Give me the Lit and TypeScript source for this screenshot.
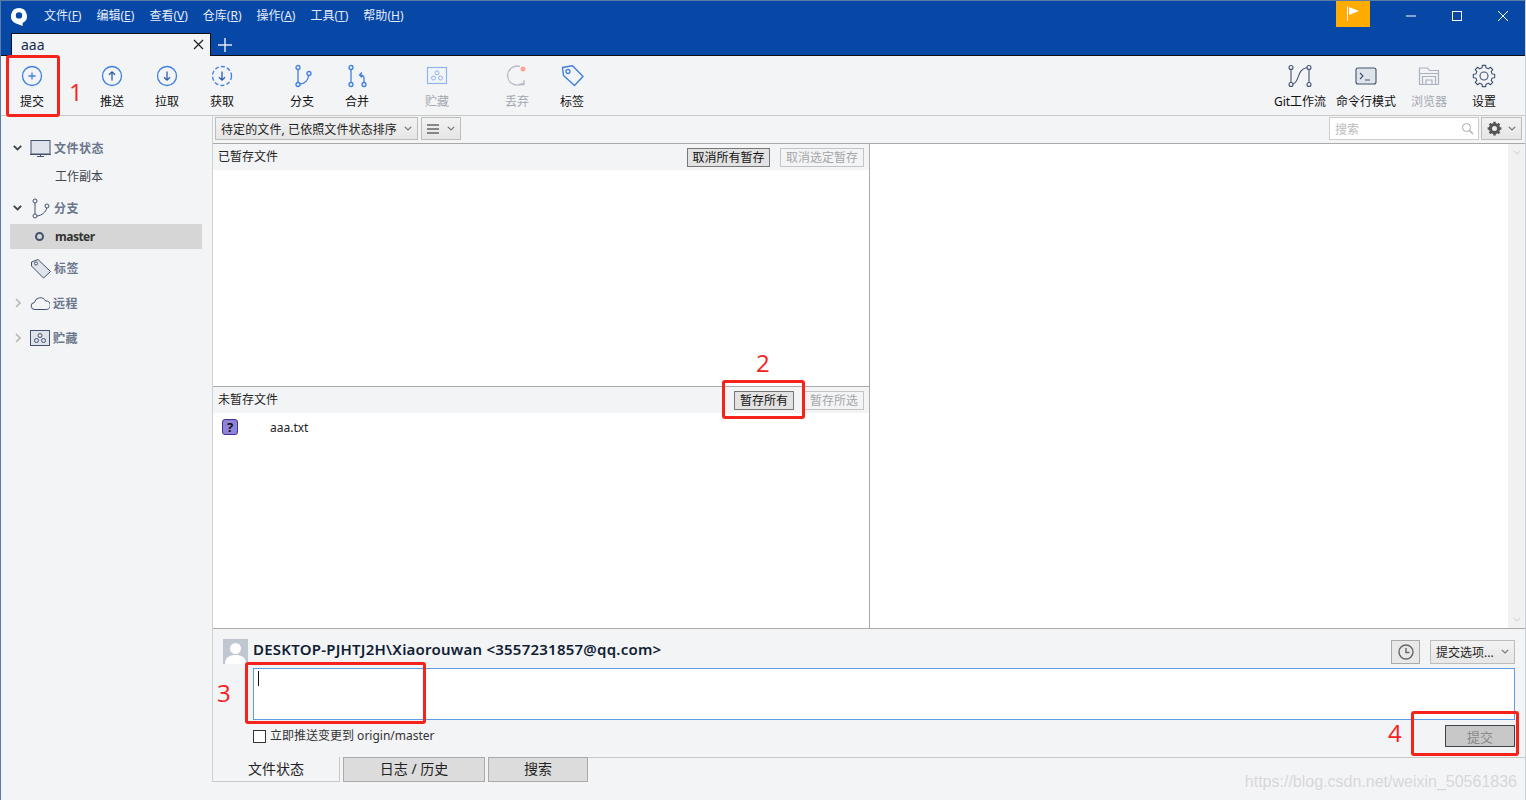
import { LitElement, html, css, svg } from "lit";
import { customElement } from "lit/decorators.js";

const B = "#3f7fe0";
const D = "#42526e";
const ic = (c: unknown, s = 24) => html`<svg width=${s} height=${s} viewBox="0 0 24 24" fill="none">${c}</svg>`;

function gearPath(cx: number, cy: number, ro: number, ri: number, n: number) {
  const pts: string[] = [];
  const step = (Math.PI * 2) / n;
  for (let k = 0; k < n; k++) {
    const a = k * step - Math.PI / 2;
    const w = step * 0.2;
    const w2 = step * 0.3;
    const p = (r: number, t: number) => `${(cx + r * Math.cos(t)).toFixed(2)} ${(cy + r * Math.sin(t)).toFixed(2)}`;
    pts.push(p(ri, a - w2), p(ro, a - w), p(ro, a + w), p(ri, a + w2));
  }
  return `M${pts.join("L")}Z`;
}

const icons: Record<string, unknown> = {
  commit: svg`<circle cx="12" cy="12" r="9.5" stroke=${B} stroke-width="1.3"/><path d="M12 8.5v7M8.5 12h7" stroke=${B} stroke-width="1.3"/>`,
  push: svg`<circle cx="12" cy="12" r="9.5" stroke=${B} stroke-width="1.3"/><path d="M12 16.5V8M9 10.8 12 7.8l3 3" stroke="#2a5cb0" stroke-width="1.3"/>`,
  pull: svg`<circle cx="12" cy="12" r="9.5" stroke=${B} stroke-width="1.3"/><path d="M12 7.5V16M9 13.2l3 3 3-3" stroke="#2a5cb0" stroke-width="1.3"/>`,
  fetch: svg`<circle cx="12" cy="12" r="9.5" stroke=${B} stroke-width="1.3" stroke-dasharray="4 2.2"/><path d="M12 7.5V16M9 13.2l3 3 3-3" stroke="#2a5cb0" stroke-width="1.3"/>`,
  branch: svg`<circle cx="8" cy="3.5" r="2" stroke=${B} stroke-width="1.3"/><circle cx="8" cy="20.5" r="2" stroke=${B} stroke-width="1.3"/><circle cx="19" cy="9.5" r="2" stroke=${B} stroke-width="1.3"/><path d="M8 5.5v13M10 20c5-.5 8-4 8.6-8.5" stroke=${B} stroke-width="1.3"/>`,
  merge: svg`<circle cx="6" cy="3.5" r="2" stroke=${B} stroke-width="1.3"/><circle cx="6" cy="20.5" r="2" stroke=${B} stroke-width="1.3"/><circle cx="19" cy="20.5" r="2" stroke=${B} stroke-width="1.3"/><path d="M6 5.5v13M19 18.5v-4c0-2-1.500-3.500-4-3.500M17 8.500 14.500 11l2.500 2.500" stroke=${B} stroke-width="1.3"/>`,
  stash: svg`<rect x="2.500" y="3.500" width="19" height="16" fill="#f3f4f6" stroke="#8fb4ee" stroke-width="1.2"/><circle cx="12" cy="8.800" r="2" stroke="#8fb4ee"/><circle cx="8.500" cy="14" r="2" stroke="#8fb4ee"/><circle cx="15.500" cy="14" r="2" stroke="#8fb4ee"/>`,
  discard: svg`<path d="M18 19a9.500 9.500 0 1 1-3-16.500" stroke="#b4bac4" stroke-width="1.300"/><path d="M14 20.500h5v-4.500" stroke="#b4bac4" stroke-width="1.300"/><circle cx="18" cy="5" r="2.500" fill="#ffa39a"/>`,
  tag: svg`<path d="M2.500 3.500 12.500 1.800 23 12.500 14.500 21.500 3.500 11.500Z" stroke=${B} stroke-width="1.400" stroke-linejoin="round"/><circle cx="8" cy="7.500" r="2" stroke=${B} stroke-width="1.300"/>`,
  flow: svg`<circle cx="3" cy="3.500" r="2" stroke=${D} stroke-width="1.100"/><circle cx="3" cy="20.500" r="2" stroke=${D} stroke-width="1.100"/><circle cx="21" cy="3.500" r="2" stroke=${D} stroke-width="1.100"/><circle cx="21" cy="20.500" r="2" stroke=${D} stroke-width="1.100"/><path d="M3 5.500v13M21 5.500v13M5 20c7-2 3-14 14-16.500" stroke=${D} stroke-width="1.100"/>`,
  term: svg`<rect x="2" y="4" width="20" height="16" rx="2" fill="#dfe3ea" stroke=${D} stroke-width="1.100"/><path d="M6 9l3 3-3 3M11 16h5" stroke=${D} stroke-width="1.100"/>`,
  browse: svg`<path d="M2.500 20.500V4h8l2 2.500h9v14Z" stroke="#a9b1bf" stroke-width="1.200"/><path d="M2.500 9.500h19M5.500 20.500v-8h13v8M9 20.500v-4.500h6v4.500" stroke="#a9b1bf" stroke-width="1.200"/>`,
  gear: svg`<path d=${gearPath(12, 12, 10.8, 8.4, 8)} stroke=${D} stroke-width="1.100" stroke-linejoin="round"/><circle cx="12" cy="12" r="4" stroke=${D} stroke-width="1.100"/>`,
};

const monitor = svg`<rect x="1" y="1.500" width="19" height="13.500" fill="#dfe3ea" stroke=${D}/><path d="M0 15.500h21M7 17.500h7M10.500 15.500v2" stroke=${D}/>`;
const sbBranch = svg`<circle cx="5" cy="3" r="2" stroke=${D}/><circle cx="5" cy="18" r="2" stroke=${D}/><circle cx="17" cy="8" r="2" stroke=${D}/><path d="M5 5v11M7 18c5-.5 9-4 9.700-8" stroke=${D}/>`;
const sbTag = svg`<path d="M1.500 4 8 1.500 20.500 13.500 13.500 20 1.500 8Z" fill="#dfe3ea" stroke=${D} stroke-linejoin="round"/><circle cx="6" cy="5.500" r="1.500" fill="#f3f4f6" stroke=${D}/>`;
const sbCloud = svg`<path d="M5 15.500a3.500 3.500 0 0 1-.6-7 6 6 0 0 1 11.200-1.500 4.300 4.300 0 0 1 1.200 8.500Z" stroke=${D}/>`;
const sbStash = svg`<rect x=".5" y="2.500" width="19" height="15" fill="#dfe3ea" stroke=${D}/><circle cx="10" cy="7.500" r="2" stroke=${D}/><circle cx="6.500" cy="12.500" r="2" stroke=${D}/><circle cx="13.500" cy="12.500" r="2" stroke=${D}/>`;
const chev = (cls: string) => html`<svg class=${cls} width="8" height="5" viewBox="0 0 8 5" fill="none"><path d="M.8.8 4 4 7.200.8" stroke="currentColor" stroke-width="1.200"/></svg>`;
const chevBold = html`<svg class="arrow" width="9" height="6" viewBox="0 0 9 6" fill="none"><path d="M.8.8l3.700 3.700L8.200.8" stroke="currentColor" stroke-width="1.900"/></svg>`;
const chevR = html`<svg class="arrow closed" width="6" height="10" viewBox="0 0 6 10" fill="none"><path d="M1 1l4 4-4 4" stroke="currentColor" stroke-width="1.600"/></svg>`;

type Tool = { k: string; t: string; off?: boolean; gap?: boolean; w?: number };
const left: Tool[] = [
  { k: "commit", t: "提交" },
  { k: "push", t: "推送", gap: true },
  { k: "pull", t: "拉取" },
  { k: "fetch", t: "获取" },
  { k: "branch", t: "分支", gap: true },
  { k: "merge", t: "合并" },
  { k: "stash", t: "贮藏", off: true, gap: true },
  { k: "discard", t: "丢弃", off: true, gap: true },
  { k: "tag", t: "标签" },
];
const right: Tool[] = [
  { k: "flow", t: "Git工作流", w: 61 },
  { k: "term", t: "命令行模式", w: 71 },
  { k: "browse", t: "浏览器", off: true },
  { k: "gear", t: "设置" },
];
const menus: [string, string][] = [["文件", "F"], ["编辑", "E"], ["查看", "V"], ["仓库", "R"], ["操作", "A"], ["工具", "T"], ["帮助", "H"]];

@customElement("app-root")
export class AppRoot extends LitElement {
  static styles = css`
    :host { display: block; height: 800px; overflow: hidden; font: 12px "Noto Sans", "Noto Sans CJK SC", sans-serif; color: #172b4d; }
    * { box-sizing: border-box; }
    .win { position: relative; height: 800px; display: flex; flex-direction: column; background: #f3f4f6; border-left: 1px solid #5b7da5; border-top: 1px solid #5b7da5; border-right: 1px solid #c9d3e0; overflow: hidden; }
    .top { height: 55px; background: #0747a6; border-bottom: 1px solid #111; flex: none; display: flex; flex-direction: column; }
    .menubar { height: 31px; display: flex; align-items: center; color: #fff; flex: none; margin-right: -1px; }
    .logo { width: 16px; height: 18px; margin: 0 17px 0 10px; }
    .menu { display: flex; gap: 15px; color: #e6ecf6; margin-top: -3px; }
    .menu span { white-space: nowrap; }
    .menu u { text-underline-offset: 1px; }
    .spacer { flex: 1; }
    .flag { width: 34px; height: 26px; background: #ffab00; display: flex; align-items: center; justify-content: center; margin-top: -5px; margin-right: 18px; }
    .wc { width: 46px; height: 30px; display: flex; align-items: center; justify-content: center; margin-top: -2px; }
    .tabs { display: flex; align-items: flex-end; height: 23px; padding-left: 10px; }
    .tab { width: 200px; height: 23px; margin-bottom: -1px; background: #f3f4f6; border: 1px solid #111; border-bottom: none; display: flex; align-items: center; justify-content: space-between; padding: 0 6px 2px 9px; font-size: 14px; color: #172b4d; }
    .plus { margin: 0 0 3px 7px; display: flex; }
    .toolbar { height: 60px; flex: none; display: flex; padding-left: 3.5px; padding-right: 13.5px; border-bottom: 1px solid #c8c8c8; }
    .tool { width: 55px; display: flex; flex-direction: column; align-items: center; padding-top: 8px; color: #111; white-space: nowrap; }
    .tool svg { display: block; }
    .tool span { margin-top: 5px; line-height: 18px; }
    .tool.off span { color: #a3a8af; }
    .tool.gap { margin-left: 25px; }
    .body { flex: 1; display: flex; min-height: 0; }
    .side { width: 211px; flex: none; padding-top: 19px; color: #6b778c; font-size: 12px; letter-spacing: .5px; font-weight: 700; }
    .row { height: 26px; display: flex; align-items: center; }
    .row .arrow { width: 9px; margin-left: 12px; color: #42464d; flex: none; }
    .row .arrow.closed { color: #b8b8b8; width: 6px; margin-left: 14px; margin-right: 1px; }
    .row svg.i { margin: 0 3px 0 8px; flex: none; }
    .row .none { width: 21px; flex: none; }
    .mt3 { margin-top: 3px; } .mt4 { margin-top: 4px; } .mt6 { margin-top: 6px; } .mt9 { margin-top: 9px; }
    .sub { height: 30px; display: flex; align-items: center; padding-left: 54px; color: #42464d; letter-spacing: 0; font-weight: 400; }
    .master { height: 25px; margin-left: 9px; margin-right: 10px; background: #d6d6d6; display: flex; align-items: center; color: #333; font-weight: 700; letter-spacing: -.5px; }
    .master i { width: 9px; height: 9px; border: 2px solid #42526e; border-radius: 50%; margin: 0 11px 0 25px; }
    .main { flex: 1; min-width: 0; display: flex; flex-direction: column; height: 666px; border-left: 1px solid #d0d0d0; }
    .filter { height: 28px; flex: none; border-bottom: 1px solid #aaa; display: flex; align-items: center; padding: 0 3px 2px 2px; gap: 3px; }
    .dd { height: 23px; border: 1px solid #bdbdbd; background: linear-gradient(#f2f2f2, #e6e6e6); display: flex; align-items: center; justify-content: space-between; padding: 0 5px; color: #222; white-space: nowrap; }
    .dd svg.c { color: #777; }
    .d1 { width: 203px; letter-spacing: .1px; }
    .d2 { width: 40px; }
    .search { width: 150px; height: 23px; margin-left: auto; border: 1px solid #ccc; background: #fff; display: flex; align-items: center; justify-content: space-between; padding: 0 4px 0 5px; color: #bbb; }
    .d3 { width: 41px; margin-left: -1px; }
    .panes { flex: 1; display: flex; min-height: 0; border-bottom: 1px solid #aaa; }
    .staged { width: 657px; flex: none; border-right: 1px solid #aaa; display: flex; flex-direction: column; }
    .pane { display: flex; flex-direction: column; background: #fff; }
    .pane.a { height: 243px; border-bottom: 1px solid #aaa; }
    .pane.b { flex: 1; }
    .ph { height: 26px; flex: none; background: #f3f4f6; display: flex; align-items: center; padding: 0 5px; color: #222; }
    .ph b { flex: 1; font-weight: 400; margin-top: -2px; }
    .btn { height: 19px; margin-top: 1px; border: 1px solid #777; background: #e2e2e2; display: flex; align-items: center; justify-content: center; color: #111; line-height: 1; white-space: nowrap; }
    .btn.off { border-color: #c4c4c4; background: #f3f4f6; color: #a6a6a6; }
    .b83 { width: 83px; } .b84 { width: 84px; margin-left: 10px; } .b60 { width: 60px; } .b60x { width: 60px; margin-left: 10px; }
    .file { height: 28px; display: flex; align-items: center; padding-left: 9px; color: #222; }
    .q { width: 16px; height: 16px; border-radius: 3px; background: #8f84d8; border: 1px solid #403294; color: #111; font-weight: 700; font-size: 13px; display: flex; align-items: center; justify-content: center; margin-right: 32px; line-height: 1; }
    .diff { flex: 1; background: #fff; display: flex; justify-content: flex-end; }
    .sb { width: 17px; background: #f1f1f1; display: flex; flex-direction: column; justify-content: space-between; align-items: center; padding: 6px 0; color: #d8d8d8; }
    .commit { height: 128px; flex: none; padding: 10px 10px 0 10px; display: flex; flex-direction: column; }
    .who { height: 25px; display: flex; align-items: center; }
    .avatar { width: 25px; height: 25px; background: #c1c7d0; margin-right: 5px; overflow: hidden; flex: none; }
    .name { flex: 1; font-size: 15px; font-weight: 600; letter-spacing: .23px; color: #111d33; margin-top: -5px; }
    .hist { width: 29px; height: 24px; border: 1px solid #aaa; background: #e8e8e8; display: flex; align-items: center; justify-content: center; margin-right: 10px; }
    .opts { width: 85px; height: 24px; }
    .msg { margin: 4px 0 0 30px; height: 52px; border: 1px solid #5b9ee6; background: #fff; padding: 2px 4px; flex: none; }
    .caret { width: 1px; height: 15px; background: #111; }
    .foot { display: flex; align-items: center; height: 22px; margin: 5px 0 0 30px; color: #333; }
    .chk { width: 13px; height: 13px; border: 1px solid #333; background: #fff; margin-right: 4px; }
    .foot .sub2 { flex: 1; margin-top: -2px; }
    .go { width: 70px; height: 22px; background: #c8c8c8; border: 1px solid #444; color: #8a8a8a; display: flex; align-items: center; justify-content: center; font-size: 13px; }
    .vt { height: 25px; flex: none; display: flex; font-size: 14px; color: #222; }
    .vt > div { display: flex; align-items: center; justify-content: center; padding-bottom: 3px; }
    .vt .on { width: 127px; border-bottom: 1px solid #c8c8c8; border-right: 1px solid #c8c8c8; height: 25px; }
    .vt .tb { background: #dcdcdc; border: 1px solid #aaa; margin-left: 3px; height: 25px; }
    .vt .l { width: 142px; } .vt .s { width: 100px; }
    .vt .rest { flex: 1; border-top: 1px solid #c8c8c8; height: 1px; padding: 0; }
    .mark { position: absolute; border: 3px solid #f5231c; border-radius: 3px; pointer-events: none; }
    .m1 { left: 5px; top: 54px; width: 54px; height: 62px; }
    .m2 { left: 721px; top: 379px; width: 83px; height: 39px; }
    .m3 { left: 244px; top: 661px; width: 181px; height: 62px; }
    .m4 { left: 1410px; top: 710px; width: 108px; height: 45px; }
    .num { position: absolute; color: #f5231c; font: 400 24px/1 "Open Sans", sans-serif; }
    .n1 { left: 68px; top: 79px; } .n2 { left: 755px; top: 350px; } .n3 { left: 216px; top: 680px; } .n4 { left: 1387px; top: 720px; }
    .wm { position: absolute; right: 8px; top: 772px; font: 16px "Liberation Sans", sans-serif; color: rgba(190,190,190,.55); white-space: nowrap; }
  `;

  tool(t: Tool) {
    return html`<div class="tool ${t.off ? "off" : ""} ${t.gap ? "gap" : ""}" style=${t.w ? `width:${t.w}px` : ""}>${ic(icons[t.k])}<span>${t.t}</span></div>`;
  }

  render() {
    return html`<div class="win">
      <div class="top">
        <div class="menubar">
          <svg class="logo" viewBox="0 0 16 18"><path fill="#fff" fill-rule="evenodd" d="M8 0a8 8 0 0 1 3.600 15.100V18L4.500 15.200A8 8 0 0 1 8 0Zm0 4.200a3.200 3.200 0 1 0 0 6.400 3.200 3.200 0 0 0 0-6.400Z"/></svg>
          <div class="menu">${menus.map(([a, b]) => html`<span>${a}(<u>${b}</u>)</span>`)}</div>
          <div class="spacer"></div>
          <div class="flag"><svg width="14" height="16" viewBox="0 0 14 16"><path d="M1.500 0v15" stroke="#fff"/><path d="M3 1l10 4-10 4Z" fill="#fff"/></svg></div>
          <div class="wc"><svg width="12" height="12"><path d="M1 6h10" stroke="#fff"/></svg></div>
          <div class="wc"><svg width="12" height="12"><rect x="1.500" y="1.500" width="9" height="9" fill="none" stroke="#fff"/></svg></div>
          <div class="wc"><svg width="12" height="12"><path d="M1 1l10 10M11 1 1 11" stroke="#fff"/></svg></div>
        </div>
        <div class="tabs">
          <div class="tab">aaa<svg width="11" height="11"><path d="M1 1l9 9M10 1 1 10" stroke="#222" stroke-width="1.300"/></svg></div>
          <div class="plus"><svg width="14" height="14"><path d="M7 0v14M0 7h14" stroke="#dfe7f3" stroke-width="1.500"/></svg></div>
        </div>
      </div>
      <div class="toolbar">
        ${left.map((t) => this.tool(t))}
        <div class="spacer"></div>
        ${right.map((t) => this.tool(t))}
      </div>
      <div class="body">
        <div class="side">
          <div class="row">${chevBold}<svg class="i" width="21" height="19" viewBox="0 0 21 19" fill="none">${monitor}</svg>文件状态</div>
          <div class="sub">工作副本</div>
          <div class="row mt4">${chevBold}<svg class="i" width="21" height="21" viewBox="0 0 21 21" fill="none">${sbBranch}</svg>分支</div>
          <div class="master mt3"><i></i>master</div>
          <div class="row mt6"><span class="none"></span><svg class="i" width="21" height="21" viewBox="0 0 21 21" fill="none">${sbTag}</svg>标签</div>
          <div class="row mt9">${chevR}<svg class="i" width="20" height="18" viewBox="0 0 20 18" fill="none">${sbCloud}</svg>远程</div>
          <div class="row mt9">${chevR}<svg class="i" width="20" height="20" viewBox="0 0 20 20" fill="none">${sbStash}</svg>贮藏</div>
        </div>
        <div class="main">
          <div class="filter">
            <div class="dd d1">待定的文件, 已依照文件状态排序${chev("c")}</div>
            <div class="dd d2"><svg width="12" height="10"><path d="M0 1h12M0 5h12M0 9h12" stroke="#222"/></svg>${chev("c")}</div>
            <div class="search">搜索<svg width="13" height="13" fill="none"><circle cx="5.500" cy="5.500" r="4" stroke="#aaa"/><path d="M8.500 8.500 12 12" stroke="#aaa" stroke-width="1.300"/></svg></div>
            <div class="dd d3"><svg width="15" height="15" viewBox="0 0 24 24" fill="none"><circle cx="12" cy="12" r="6.500" stroke="#555" stroke-width="5"/><path d="M12 1v5M12 18v5M1 12h5M18 12h5M4.200 4.200l3.500 3.500M16.300 16.300l3.500 3.500M4.200 19.800l3.500-3.500M16.300 7.700l3.500-3.500" stroke="#555" stroke-width="4"/></svg>${chev("c")}</div>
          </div>
          <div class="panes">
            <div class="staged">
              <div class="pane a">
                <div class="ph"><b>已暂存文件</b><div class="btn b83">取消所有暂存</div><div class="btn off b84">取消选定暂存</div></div>
              </div>
              <div class="pane b">
                <div class="ph"><b>未暂存文件</b><div class="btn b60">暂存所有</div><div class="btn off b60x">暂存所选</div></div>
                <div class="file"><span class="q">?</span>aaa.txt</div>
              </div>
            </div>
            <div class="diff"><div class="sb">${chev("")}${chev("")}</div></div>
          </div>
          <div class="commit">
            <div class="who">
              <div class="avatar"><svg width="25" height="25"><circle cx="12.500" cy="9.500" r="5.500" fill="#fff"/><path d="M2 25c0-7 5-9 10.500-9S23 18 23 25Z" fill="#fff"/></svg></div>
              <div class="name">DESKTOP-PJHTJ2H\\Xiaorouwan &lt;3557231857@qq.com&gt;</div>
              <div class="hist"><svg width="16" height="16" fill="none"><circle cx="8" cy="8" r="7" stroke="#666" stroke-width="1.400"/><path d="M8 4v4.500h3.500" stroke="#666" stroke-width="1.400"/></svg></div>
              <div class="dd opts">提交选项...${chev("c")}</div>
            </div>
            <div class="msg"><div class="caret"></div></div>
            <div class="foot"><span class="chk"></span><span class="sub2">立即推送变更到 origin/master</span><div class="go">提交</div></div>
          </div>
          <div class="vt">
            <div class="on">文件状态</div>
            <div class="tb l">日志 / 历史</div>
            <div class="tb s">搜索</div>
            <div class="rest"></div>
          </div>
        </div>
      </div>
      <div class="mark m1"></div><div class="mark m2"></div><div class="mark m3"></div><div class="mark m4"></div>
      <div class="num n1">1</div><div class="num n2">2</div><div class="num n3">3</div><div class="num n4">4</div>
      <div class="wm">https://blog.csdn.net/weixin_50561836</div>
    </div>`;
  }
}
